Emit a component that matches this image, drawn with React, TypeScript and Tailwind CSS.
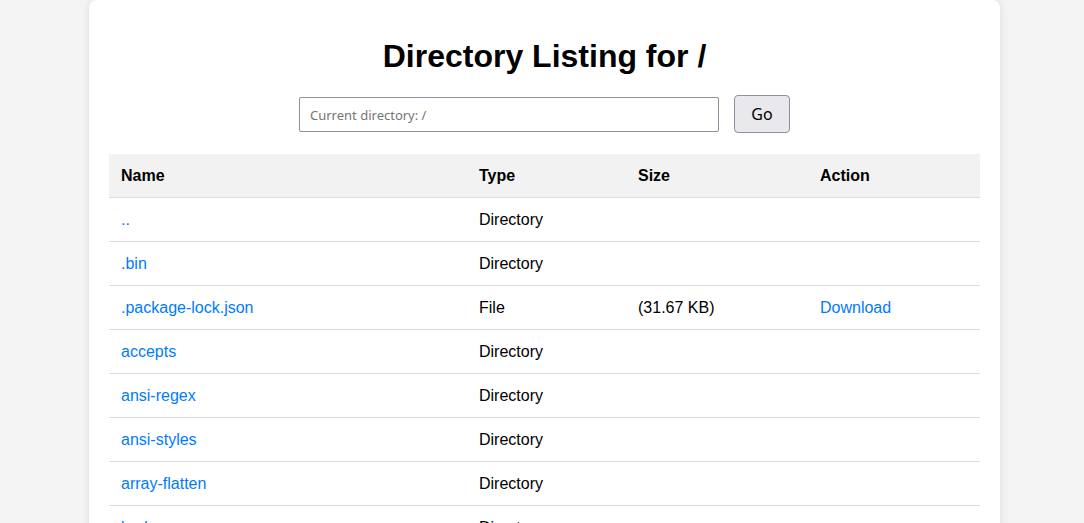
import React from "react";

const rows: { name: string; type: string; size?: string; download?: boolean }[] = [
  { name: "..", type: "Directory" },
  { name: ".bin", type: "Directory" },
  { name: ".package-lock.json", type: "File", size: "(31.67 KB)", download: true },
  { name: "accepts", type: "Directory" },
  { name: "ansi-regex", type: "Directory" },
  { name: "ansi-styles", type: "Directory" },
  { name: "array-flatten", type: "Directory" },
  { name: "body-parser", type: "Directory" },
];

export default function App() {
  return (
    <div
      className="min-h-[523px] h-[523px] overflow-hidden bg-[#f4f4f4]"
      style={{ fontFamily: '"Liberation Sans", Arial, sans-serif' }}
    >
      <div className="ml-[89px] w-[911px] bg-white rounded-[8px] shadow-[0_0_10px_rgba(0,0,0,0.1)] px-[20px] pt-[20px] pb-[40px]">
        <h1 className="text-center text-[32px] font-bold text-black leading-[36px] mt-[18px] mb-[21px]">
          Directory Listing for /
        </h1>
        <div className="flex justify-center items-center gap-[15px] mb-[21px]">
          <input
            className="w-[420px] h-[35px] border border-[#8f8f9d] rounded-[2px] px-[10px] pt-[2px] text-[13px] placeholder:text-[#757575] outline-none"
            style={{ fontFamily: '"Noto Sans", "Open Sans", sans-serif' }}
            placeholder="Current directory: /"
          />
          <button
            className="w-[56px] h-[38px] bg-[#e9e9ed] border border-[#8f8f9d] rounded-[4px] text-[16px] text-black"
            style={{ fontFamily: '"Noto Sans", "Open Sans", sans-serif' }}
          >
            Go
          </button>
        </div>
        <table className="w-[871px] border-collapse text-[16px] text-black table-fixed">
          <colgroup>
            <col className="w-[358px]" />
            <col className="w-[159px]" />
            <col className="w-[182px]" />
            <col className="w-[172px]" />
          </colgroup>
          <thead>
            <tr className="bg-[#f2f2f2] h-[43px] border-b border-[#dddddd]">
              <th className="text-left font-bold px-[12px] pt-[2px]">Name</th>
              <th className="text-left font-bold px-[12px] pt-[2px]">Type</th>
              <th className="text-left font-bold px-[12px] pt-[2px]">Size</th>
              <th className="text-left font-bold px-[12px] pt-[2px]">Action</th>
            </tr>
          </thead>
          <tbody>
            {rows.map((r) => (
              <tr key={r.name} className="h-[44px] border-b border-[#dddddd]">
                <td className="px-[12px] pt-[2px]">
                  <a href="#" className="text-[#007bff]">
                    {r.name}
                  </a>
                </td>
                <td className="px-[12px] pt-[2px]">{r.type}</td>
                <td className="px-[12px] pt-[2px]">{r.size ?? ""}</td>
                <td className="px-[12px] pt-[2px]">
                  {r.download ? (
                    <a href="#" className="text-[#007bff]">
                      Download
                    </a>
                  ) : null}
                </td>
              </tr>
            ))}
          </tbody>
        </table>
      </div>
    </div>
  );
}
